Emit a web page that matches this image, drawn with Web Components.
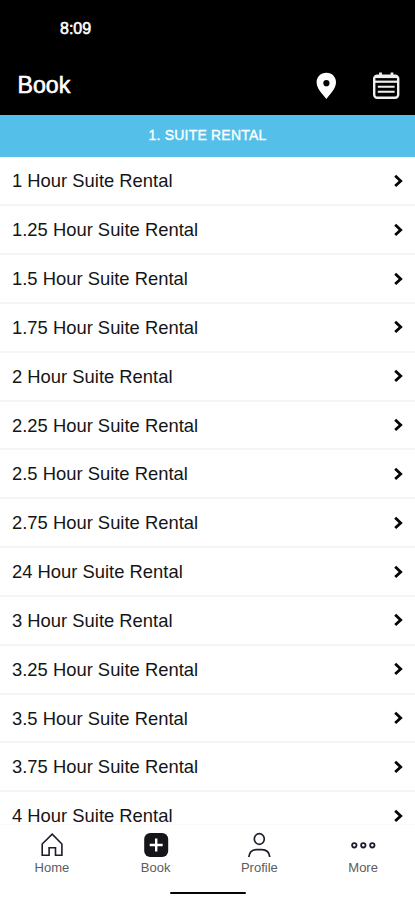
<!DOCTYPE html>
<html lang="en">
<head>
<meta charset="utf-8">
<title>Book</title>
<style>
html,body{margin:0;height:100%;background:#fff;overflow:hidden}
body{font-family:"Liberation Sans",Arial,sans-serif}
</style>
</head>
<body>
<booking-app></booking-app>
<script>
class BaseElement extends HTMLElement{
  constructor(){super();this.attachShadow({mode:'open'}).innerHTML=this.view();}
}
customElements.define('status-bar',class extends BaseElement{
  view(){return `<style>:host{display:flex;height:56px;box-sizing:border-box;padding:20px 0 0 60px;background:#000;color:#fff;font-size:16px;line-height:18px;-webkit-text-stroke:.55px #fff}</style><slot></slot>`;}
});
customElements.define('title-bar',class extends BaseElement{
  view(){return `<style>
:host{display:flex;align-items:center;height:59px;box-sizing:border-box;padding:0 15px 0 17.5px;background:#000;color:#fff}
h1{margin:0 auto 0 0;font-size:23.2px;font-weight:400;line-height:28px;padding-bottom:1px;-webkit-text-stroke:.6px #fff}
svg{display:block}
.pin{margin-right:35px}
</style><h1><slot></slot></h1>
<svg class="pin" width="22" height="28" viewBox="0 0 22 28"><path fill="#fff" fill-rule="evenodd" d="M11.400.7C5.700.7 1.600 4.900 1.600 10.200 1.600 16.600 7.200 21.500 11.400 27c4-5.500 9.600-10.400 9.600-16.800C21 4.900 17.100.7 11.400.7zm0 7.400a3.100 3.100 0 1 1 0 6.200 3.100 3.100 0 0 1 0-6.200z"/></svg>
<svg width="28" height="28" viewBox="0 0 28 28" fill="none" stroke="#f0f0ee"><rect x="2.200" y="3.600" width="24" height="22.200" rx="3" stroke-width="2.400"/><path d="M8.500.6v3M20 .6v3" stroke-width="2.800"/><path d="M3 5h22.500" stroke-width="2.200"/><path d="M3 9.700h22.500" stroke-width="2.200"/><path d="M5.800 14.800h16.800M5.800 19.700h16.800" stroke-width="2.100"/></svg>`;}
});
customElements.define('section-title',class extends BaseElement{
  view(){return `<style>:host{display:flex;align-items:center;justify-content:center;height:41.500px;box-sizing:border-box;padding-bottom:1px;background:#54c0ea;color:#fff;font-size:14px;letter-spacing:.2px;-webkit-text-stroke:.35px #fff}</style><slot></slot>`;}
});
customElements.define('service-row',class extends BaseElement{
  view(){return `<style>
:host{display:flex;align-items:center;justify-content:space-between;height:48.830px;flex:none;box-sizing:border-box;border-bottom:2px solid #f5f5f5;padding:0 11px 0 12px;font-size:18.400px;line-height:17px;color:#151515;white-space:nowrap}
svg{display:block}
</style><span><slot></slot></span><svg width="11" height="14" viewBox="0 0 11 14" fill="none" stroke="#050505" stroke-width="2.800"><path d="m2.200 1.700 5.500 5.200-5.500 5.200"/></svg>`;}
});
const NAV_ICONS={
  home:'<path d="M4.200 12 14.200 2.200l9.700 9.800v11.300h-6.400v-7.500h-6.400v7.500H4.200z" fill="none" stroke="#1c1c2c" stroke-width="1.600"/>',
  book:'<rect x="2.200" y="1" width="24" height="24" rx="6" fill="#15151a"/><path d="M14.200 6.500v13M7.700 13h13" stroke="#fff" stroke-width="2.400" fill="none"/>',
  profile:'<g fill="none" stroke="#1c1c2c" stroke-width="1.700"><ellipse cx="14.300" cy="7" rx="5" ry="5.300"/><path d="M3.800 25c.5-4.600 3.700-7.400 8-7.400h5c4.300 0 7.500 2.800 8 7.400"/></g>',
  more:'<g fill="none" stroke="#1c1c2c" stroke-width="1.800"><circle cx="5.300" cy="13.300" r="2.200"/><circle cx="14.300" cy="13.300" r="2.200"/><circle cx="23.300" cy="13.300" r="2.200"/></g>'
};
customElements.define('nav-tab',class extends BaseElement{
  view(){return `<style>
:host{display:flex;flex-direction:column;align-items:center;font-size:13px;line-height:15px;color:#5c5c60}
svg{display:block}
</style><svg width="28" height="28" viewBox="0 0 28 28"></svg><span><slot></slot></span>`;}
  connectedCallback(){this.shadowRoot.querySelector('svg').innerHTML=NAV_ICONS[this.getAttribute('icon')];}
});
customElements.define('bottom-nav',class extends BaseElement{
  view(){return `<style>
:host{display:flex;flex-direction:column;align-items:center;justify-content:space-between;height:76px;box-sizing:border-box;border-top:1px solid #fafafa;padding:7px 0 6px;background:#fff}
nav{display:grid;grid-template-columns:repeat(4,1fr);width:100%}
i{width:76px;height:2px;border-radius:1px;background:#050505}
</style><nav><slot></slot></nav><i></i>`;}
});
customElements.define('booking-app',class extends BaseElement{
  view(){
    const hours=['1','1.25','1.5','1.75','2','2.25','2.5','2.75','24','3','3.25','3.5','3.75','4'];
    return `<style>
:host{display:flex;flex-direction:column;width:100%;height:900px;overflow:hidden;background:#fff}
status-bar,title-bar,section-title,bottom-nav{flex:none}
main{display:flex;flex-direction:column;flex:1;min-height:0;overflow:hidden;padding-top:1px}
</style>
<status-bar>8:09</status-bar><title-bar>Book</title-bar><section-title>1. SUITE RENTAL</section-title>
<main>${hours.map(h=>`<service-row>${h} Hour Suite Rental</service-row>`).join('')}</main>
<bottom-nav><nav-tab icon="home">Home</nav-tab><nav-tab icon="book">Book</nav-tab><nav-tab icon="profile">Profile</nav-tab><nav-tab icon="more">More</nav-tab></bottom-nav>`;
  }
});
</script>
</body>
</html>
